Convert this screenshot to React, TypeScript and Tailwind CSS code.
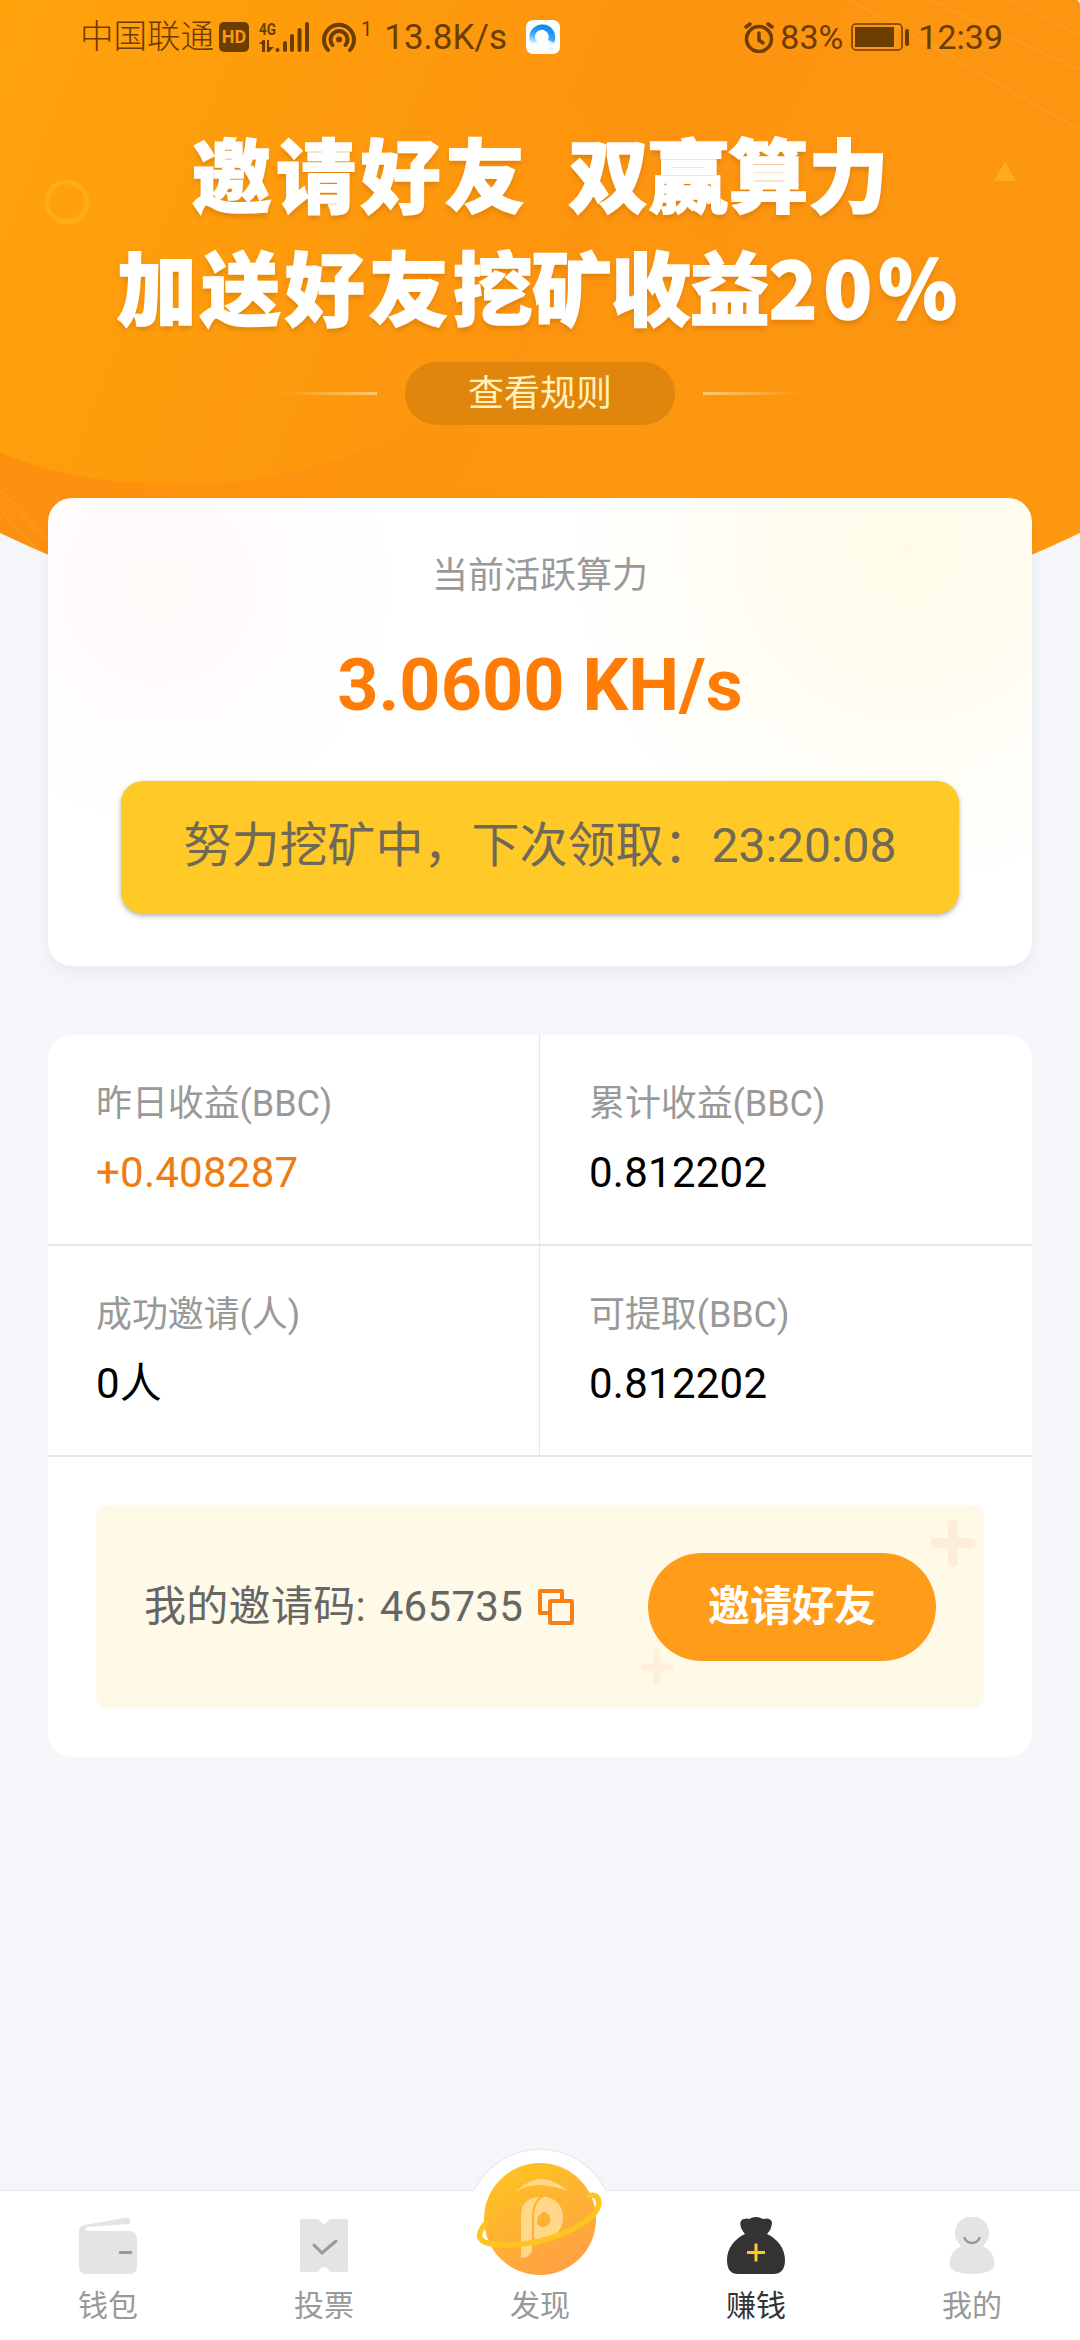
const FONT = "font-['Roboto','Noto_Sans_CJK_SC',sans-serif]";

function StatusBar() {
  return (
    <div className="flex h-[74px] items-center pl-20 pr-[77px] text-[35px] leading-none text-[#6b3d00]">
      <span className="w-[134px] whitespace-nowrap text-[33.5px] font-light leading-[44px]">中国联通</span>
      <span className="ml-[5px] flex h-[30px] w-[30px] items-center justify-center rounded-[5px] bg-[#6b3d00] text-[18px] font-bold text-[#fb9a0c]">
        HD
      </span>
      <div className="ml-[10px] flex h-[34px] w-[52px]">
        <svg className="overflow-visible" width="52" height="34" viewBox="0 0 52 34" fill="#6b3d00">
          <text x="0" y="15" fontSize="17" fontWeight="700" textLength="17" lengthAdjust="spacingAndGlyphs">
            4G
          </text>
          <path d="M0 24l4-4h2v12H3v-8zM8 20h2v7h5l-5 5H8z" />
          <rect x="16.500" y="28" width="4" height="4" rx="2" />
          <rect x="24" y="21" width="4" height="11" rx="2" />
          <rect x="31" y="14" width="4" height="18" rx="2" />
          <rect x="38.500" y="8" width="4" height="24" rx="2" />
          <rect x="46" y="2" width="4" height="30" rx="2" />
        </svg>
      </div>
      <svg className="ml-[10px]" width="36" height="34" viewBox="0 0 36 34" fill="none" stroke="#6b3d00" strokeWidth="4" strokeLinecap="round">
        <path d="M7 30a15 15 0 1 1 22 0" />
        <path d="M11.500 25a8.500 8.500 0 1 1 13 0" />
        <circle cx="18" cy="19.500" r="3" fill="#6b3d00" stroke="none" />
      </svg>
      <span className="ml-1 h-9 text-[20px]">1</span>
      <span className="ml-[12px] w-[128px] whitespace-nowrap">13.8K/s</span>
      <svg className="ml-[14px]" width="34" height="34" viewBox="0 0 34 34">
        <defs>
          <linearGradient id="browser" x1="0.700" y1="0" x2="0.300" y2="1">
            <stop offset="0" stopColor="#0b7fe6" />
            <stop offset="0.600" stopColor="#35a8f5" />
            <stop offset="1" stopColor="#d8eefc" />
          </linearGradient>
        </defs>
        <rect width="34" height="34" rx="7" fill="#fdfdfd" />
        <path d="M17 4A13 13 0 1 1 16 30H29L22 22A7 7 0 1 0 12 22Q4 22 4 17A13 13 0 0 1 17 4Z" fill="#e3f3fd" />
        <path d="M5 24A13 13 0 1 1 28 23L22 20A7 7 0 1 0 11 22Z" fill="url(#browser)" />
      </svg>
      <div className="flex-1" />
      <svg width="32" height="32" viewBox="0 0 32 32" fill="none" stroke="#6b3d00" strokeWidth="3.500" strokeLinecap="round">
        <circle cx="16" cy="18" r="12.500" />
        <path d="M16 12v7l4 3M3 6l4-3M29 6l-4-3" />
      </svg>
      <span className="ml-[5px] w-[62px] whitespace-nowrap text-[34px]">83%</span>
      <svg className="ml-[9px]" width="60" height="28" viewBox="0 0 60 28" fill="#6b3d00">
        <rect x="1" y="1" width="50" height="26" rx="4" fill="none" stroke="#6b3d00" strokeWidth="1.500" />
        <rect x="4" y="4" width="39" height="20" />
        <rect x="54" y="6" width="4" height="17" rx="2" />
      </svg>
      <span className="ml-[7px] text-[34px]">12:39</span>
    </div>
  );
}

function HeroBackground() {
  return (
    <svg className="absolute left-0 top-0" width="1080" height="660" viewBox="0 0 1080 660">
      <defs>
        <linearGradient id="hero" x1="0" y1="0" x2="1" y2="0.300">
          <stop offset="0" stopColor="#fd8d0f" />
          <stop offset="0.500" stopColor="#fd940f" />
          <stop offset="1" stopColor="#fd9810" />
        </linearGradient>
        <linearGradient id="blob" x1="0" y1="0" x2="1" y2="0.300">
          <stop offset="0" stopColor="#ffa30b" />
          <stop offset="1" stopColor="#fd940e" />
        </linearGradient>
        <clipPath id="heroClip">
          <path d="M0 0H1080V533A1250 1250 0 0 1 0 533Z" />
        </clipPath>
      </defs>
      <g clipPath="url(#heroClip)">
        <rect width="1080" height="660" fill="url(#hero)" />
        <path d="M0 0H620C680 200 500 484 185 484C110 484 50 475 0 452Z" fill="url(#blob)" />
        <path d="M1080 430C850 370 640 230 545 60L520 0H1080Z" fill="#fb9410" opacity="0.600" />
        <g fill="none" stroke="#fff" strokeOpacity="0.070" strokeWidth="2">
          <path d="M850 0L1080 130M930 0L1080 70M1010 0L1080 35M0 490L48 540M0 510L40 552" />
        </g>
        <circle cx="67" cy="202" r="20" fill="none" stroke="#ffad10" strokeWidth="5" />
        <path d="M1005 161l11 20h-22z" fill="#ffab1c" />
      </g>
      <path d="M1077 0h3v4q-1-3-3-4z" fill="#fff" />
    </svg>
  );
}

function HeroTitle() {
  return (
    <h1 className="font-['Noto_Sans_CJK_SC',sans-serif] text-[80px] font-black leading-[113px] text-white [-webkit-text-stroke:1.5px_#fff] [text-shadow:0_4px_5px_rgba(170,90,0,0.35)]">
      <div className="flex justify-center whitespace-nowrap">
        <span className="tracking-[4.5px]">邀请好友</span>
        <span className="ml-[39px]">双赢算力</span>
      </div>
      <div className="flex justify-center whitespace-nowrap">
        <span className="tracking-[4px]">加送好友</span>
        <span className="tracking-[-1px]">挖矿收益</span>
        <span className="tracking-[6px]">20%</span>
      </div>
    </h1>
  );
}

function PowerCard() {
  return (
    <section className="relative mx-12 flex h-[468px] flex-col items-center rounded-3xl bg-white bg-[radial-gradient(circle_at_110px_90px,#fff9f8_0,#ffffff00_240px),radial-gradient(circle_at_860px_50px,#fffbe8_0,#ffffff00_350px)] pt-[51px] shadow-[0_6px_14px_rgba(0,0,0,0.05)]">
      <p className="text-4xl leading-[54px] text-[#999]">当前活跃算力</p>
      <p className="mt-[41px] text-[72px] font-bold leading-[84px] text-[#ff7d06]">3.0600 KH/s</p>
      <button className="mt-[53px] h-[133px] w-[838px] whitespace-nowrap rounded-[22px] bg-[#ffc928] pb-1 text-[48px] text-[#706858] shadow-[0_2px_5px_rgba(0,0,0,0.3)]">
        努力挖矿中，下次领取：23:20:08
      </button>
    </section>
  );
}

const stats = [
  { label: "昨日收益(BBC)", value: "+0.408287", color: "text-[#ef7c10]" },
  { label: "累计收益(BBC)", value: "0.812202", color: "text-black" },
  { label: "成功邀请(人)", value: "0人", color: "text-black" },
  { label: "可提取(BBC)", value: "0.812202", color: "text-black" },
];

function StatsCard() {
  return (
    <section className="mx-12 mt-[69px] h-[722px] rounded-3xl bg-white">
      <div className="grid grid-cols-2">
        {stats.map((item) => (
          <div key={item.label} className="h-[211px] border-b-2 border-[#e6e6e6] pl-[49px] pt-[42px] odd:border-r odd:pl-[48px]">
            <p className="text-4xl leading-[54px] tracking-[-0.1px] text-[#999]">{item.label}</p>
            <p className={`mt-[10px] text-[42px] leading-[64px] tracking-[0.25px] ${item.color}`}>{item.value}</p>
          </div>
        ))}
      </div>
      <InviteBox />
    </section>
  );
}

function InviteBox() {
  return (
    <div className="relative mx-12 mt-[48px] flex h-[203px] items-center rounded-xl bg-[#fff9e8] px-12">
      <span className="whitespace-nowrap text-[42px] tracking-[0.3px] text-[#666] [word-spacing:3px]">我的邀请码: 465735</span>
      <svg className="ml-[14px]" width="38" height="38" viewBox="0 0 38 38" fill="none" stroke="#f5801a" strokeWidth="4" strokeLinejoin="round">
        <path d="M12 25H3V3h22v9" />
        <rect x="13" y="13" width="22" height="22" rx="1" />
      </svg>
      <svg className="absolute right-[8px] top-[13px]" width="46" height="50" viewBox="0 0 46 50" stroke="#fdeed8" strokeWidth="10" strokeLinecap="round">
        <path d="M23 6v38M5 25h36" />
      </svg>
      <svg className="absolute left-[544px] top-[143px]" width="34" height="38" viewBox="0 0 34 38" stroke="#fef0da" strokeWidth="7" strokeLinecap="round">
        <path d="M17 4v30M4 19h26" />
      </svg>
      <button className="relative ml-auto h-[108px] w-[288px] rounded-full bg-[#ff9d1b] text-[42px] font-bold text-white">
        邀请好友
      </button>
    </div>
  );
}

function WalletIcon() {
  return (
    <svg width="58" height="58" viewBox="0 0 58 58" fill="#e4e4e4">
      <path d="M0 14Q0 9 6 8L45 1Q51 0 51 4V7L8 10Q6 12 8 14H51Q58 15 58 22V50Q58 57 51 57H7Q0 57 0 50Z" />
      <rect x="40" y="34" width="13" height="3" rx="1" fill="#999" />
    </svg>
  );
}

function TicketIcon() {
  return (
    <svg width="58" height="58" viewBox="0 0 58 58">
      <path d="M7 2H21Q24 2 25 4Q29 10 33 4Q34 2 37 2H51Q53 2 53 4V53Q53 55 51 55H37Q34 55 33 52Q29 48 25 52Q24 55 21 55H7Q5 55 5 53V4Q5 2 7 2Z" fill="#e4e4e4" />
      <path d="M19 28l8 8 14-12" fill="none" stroke="#999" strokeWidth="3" strokeLinecap="round" />
    </svg>
  );
}

function BagIcon() {
  return (
    <svg width="58" height="58" viewBox="0 0 58 58" fill="#333">
      <path d="M18 17C13 12 11 3 17 2Q20 1 22 2Q29-2 36 2Q43 0 45 5Q45 12 40 17C51 22 58 32 58 43Q58 57 46 57H11Q0 57 0 43C0 32 7 22 18 17Z" />
      <path d="M20 35.500H38M29 26.500V44.500" stroke="#ffc928" strokeWidth="3" />
    </svg>
  );
}

function PersonIcon() {
  return (
    <svg width="58" height="58" viewBox="0 0 58 58" fill="#e4e4e4">
      <path d="M18 29A17 17 0 1 1 40 29C48 33 51.500 40 51.500 47C51.500 53 43 57 29 57S6.500 53 6.500 47C6.500 40 10 33 18 29Z" />
      <path d="M21.500 21Q24 26 29 26T36.500 21" fill="none" stroke="#999" strokeWidth="2.500" strokeLinecap="round" />
    </svg>
  );
}

function PlanetIcon() {
  return (
    <svg className="absolute left-1/2 top-[-45px] -translate-x-1/2" width="150" height="150" viewBox="465 2146 150 150">
      <defs>
        <linearGradient id="planet" x1="0.200" y1="0" x2="0.700" y2="1">
          <stop offset="0" stopColor="#fec420" />
          <stop offset="1" stopColor="#ff9f45" />
        </linearGradient>
      </defs>
      <path d="M474 2190.500A73.500 73.500 0 0 1 606 2190.500V2194H474Z" fill="#fff" />
      <path d="M474 2190.500A73.500 73.500 0 0 1 606 2190.500" fill="none" stroke="#e9ebf0" strokeWidth="1.500" />
      <circle cx="540" cy="2219" r="56" fill="url(#planet)" />
      <g fill="#ffd88a">
        <path d="M515 2192Q529 2179 541 2179T568 2191Q554 2186 541 2185T515 2192Z" />
        <path d="M521 2258V2216Q521 2198 539 2197Q532 2205 532 2215V2250Q531 2257 521 2258Z" />
        <path
          fillRule="evenodd"
          d="M544 2196.500C557 2198 563 2207 563 2218C563 2231 553 2239 541 2239H534V2218C534 2207 537 2201 544 2196.500ZM543 2212A7.500 7.500 0 1 1 537 2224Q536 2216 543 2212Z"
        />
      </g>
      <path d="M486 2223C474 2237 480 2243 495 2244.500C530 2248 572 2234 592 2216C604 2204 598 2192 589 2196" fill="none" stroke="#fec520" strokeWidth="5.500" strokeLinecap="round" />
    </svg>
  );
}

const tabs = [
  { name: "钱包", icon: <WalletIcon /> },
  { name: "投票", icon: <TicketIcon /> },
  { name: "发现", icon: <PlanetIcon /> },
  { name: "赚钱", icon: <BagIcon />, active: true },
  { name: "我的", icon: <PersonIcon /> },
];

function TabBar() {
  return (
    <nav className="mt-auto grid h-[150px] grid-cols-5 border-t border-[#e4e7ec] bg-white">
      {tabs.map((tab) => (
        <div key={tab.name} className="relative flex flex-col items-center pt-[26px]">
          <div className="h-[58px]">{tab.icon}</div>
          <span className={tab.active ? "relative mt-[9px] text-[30px] leading-[44px] text-[#333]" : "relative mt-[9px] text-[30px] leading-[44px] text-[#999]"}>
            {tab.name}
          </span>
        </div>
      ))}
    </nav>
  );
}

export default function App() {
  return (
    <div className={`relative flex h-[2340px] w-[1080px] flex-col overflow-hidden bg-[#f5f6fa] ${FONT}`}>
      <HeroBackground />
      <header className="relative h-[498px]">
        <StatusBar />
        <div className="mt-[41px]">
          <HeroTitle />
        </div>
        <div className="mt-[21px] flex items-center justify-center gap-[28px]">
          <i className="h-[3px] w-[100px] bg-linear-to-r from-transparent to-[#ffc870]" />
          <button className="h-[63px] w-[270px] rounded-full bg-[#e0860c] text-4xl text-[#fff0bd]">查看规则</button>
          <i className="h-[3px] w-[100px] bg-linear-to-l from-transparent to-[#ffc870]" />
        </div>
      </header>
      <PowerCard />
      <StatsCard />
      <TabBar />
    </div>
  );
}
